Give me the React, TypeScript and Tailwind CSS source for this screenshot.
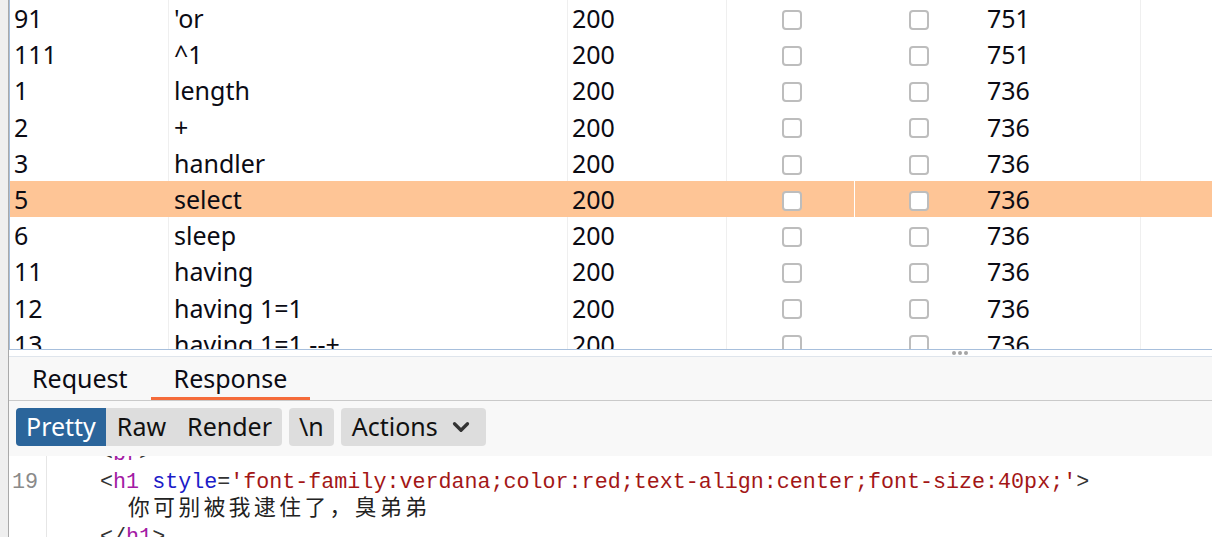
import { ChevronDown } from "lucide-react";

type Row = { id: string; payload: string; status: string; length: string };

const rows: Row[] = [
  { id: "91", payload: "'or", status: "200", length: "751" },
  { id: "111", payload: "^1", status: "200", length: "751" },
  { id: "1", payload: "length", status: "200", length: "736" },
  { id: "2", payload: "+", status: "200", length: "736" },
  { id: "3", payload: "handler", status: "200", length: "736" },
  { id: "5", payload: "select", status: "200", length: "736" },
  { id: "6", payload: "sleep", status: "200", length: "736" },
  { id: "11", payload: "having", status: "200", length: "736" },
  { id: "12", payload: "having 1=1", status: "200", length: "736" },
  { id: "13", payload: "having 1=1 --+", status: "200", length: "736" },
];

const SELECTED = "5";

function Checkbox() {
  return <div className="w-[20px] h-[20px] rounded-[4px] border-2 border-[#bdbdbd] bg-white" />;
}

function ResultRow({ row }: { row: Row }) {
  const sel = row.id === SELECTED;
  const line = sel ? "border-[#fec596]" : "border-[#efefef]";
  return (
    <div
      className={
        "grid grid-cols-[158px_399px_159px_128px_128px_158px_1fr] h-[36.2px] " +
        (sel ? "bg-[#fec596]" : "bg-white")
      }
    >
      <div className="flex items-center pl-[4px] pb-[6px]">{row.id}</div>
      <div className={"flex items-center pl-[5px] pb-[6px] border-l " + line}>{row.payload}</div>
      <div className={"flex items-center pl-[4px] pb-[6px] border-l " + line}>{row.status}</div>
      <div className={"flex items-center pl-[55px] pb-[4px] border-l " + line}>
        <Checkbox />
      </div>
      <div className={"flex items-center pl-[54px] pb-[4px] border-l " + (sel ? "border-white" : "border-transparent")}>
        <Checkbox />
      </div>
      <div className="flex items-center pl-[4px] pb-[6px] border-l border-transparent">{row.length}</div>
      <div className={"border-l " + line} />
    </div>
  );
}

function Tag({ children }: { children: string }) {
  return <span className="text-[#a41ba4]">{children}</span>;
}

export default function App() {
  return (
    <div className="h-[537px] w-[1212px] overflow-hidden bg-white flex font-['Noto_Sans',sans-serif] text-[25px] text-[#0b0b14]">
      <div className="w-[9px] shrink-0 bg-[#efefef] border-r border-[#a9a9a9]" />

      <div className="flex-1 flex flex-col min-w-0">
        {/* results table */}
        <div className="h-[350px] shrink-0 overflow-hidden border-l border-b border-[#a7bfdc]">
          {rows.map((r) => (
            <ResultRow key={r.id} row={r} />
          ))}
        </div>

        {/* splitter */}
        <div className="h-[7px] shrink-0 flex justify-end items-center pr-[244px] border-b border-[#dfe5ec]">
          <div className="flex gap-[2px]">
            <span className="w-[4px] h-[4px] rounded-full bg-[#a5a5a5]" />
            <span className="w-[4px] h-[4px] rounded-full bg-[#a5a5a5]" />
            <span className="w-[4px] h-[4px] rounded-full bg-[#a5a5a5]" />
          </div>
        </div>

        {/* tabs */}
        <div className="h-[44px] shrink-0 flex bg-[#f8f8f8] border-b border-[#cacaca]">
          <div className="px-[23px] flex items-center">Request</div>
          <div className="px-[23px] flex items-center border-b-[3px] border-[#f56b3a] pt-[3px]">Response</div>
        </div>

        {/* toolbar */}
        <div className="h-[55px] shrink-0 bg-[#f8f8f8] flex items-start pt-[7px] pl-[7px] gap-[7px] text-[#111]">
          <div className="h-[38px] flex rounded-[4px] bg-[#dddddd]">
            <div className="h-full flex items-center px-[10px] pb-[1px] rounded-l-[4px] bg-[#2b659b] text-white">Pretty</div>
            <div className="h-full flex items-center pl-[11px] pr-[10px] pb-[1px]">Raw</div>
            <div className="h-full flex items-center pl-[11px] pr-[10px] pb-[1px]">Render</div>
          </div>
          <div className="h-[38px] flex items-center px-[10px] pb-[1px] rounded-[4px] bg-[#dddddd]">\n</div>
          <div className="h-[38px] flex items-center pl-[11px] pr-[12px] gap-[10px] pb-[1px] rounded-[4px] bg-[#dddddd]">
            Actions
            <ChevronDown size={26} strokeWidth={3} className="text-[#333]" />
          </div>
        </div>

        {/* code view */}
        <div className="flex-1 overflow-hidden font-['Liberation_Mono','Noto_Sans_CJK_SC',monospace] text-[21.7px] leading-[27.5px] text-[#333]">
          <div className="-mt-[15px] flex">
            <div className="w-[38px] shrink-0 border-r border-[#e6e6e6] text-right pr-[8px] text-[#8a8a8a]">
              <div className="h-[27.5px]" />
              <div>19</div>
              <div className="h-[27.5px]" />
              <div className="h-[27.5px]" />
            </div>
            <div className="pl-[1px] whitespace-pre">
              <div>
                {"    <"}
                <Tag>br</Tag>
                {">"}
              </div>
              <div>
                {"    <"}
                <Tag>h1</Tag> <span className="text-[#1c1cc8]">style</span>=
                <span className="text-[#a31616]">'font-family:verdana;color:red;text-align:center;font-size:40px;'</span>
                {">"}
              </div>
              <div>
                {"      "}
                <span className="ml-[2px] tracking-[3.5px] text-[#222]">你可别被我逮住了，臭弟弟</span>
              </div>
              <div>
                {"    </"}
                <Tag>h1</Tag>
                {">"}
              </div>
            </div>
          </div>
        </div>
      </div>
    </div>
  );
}
